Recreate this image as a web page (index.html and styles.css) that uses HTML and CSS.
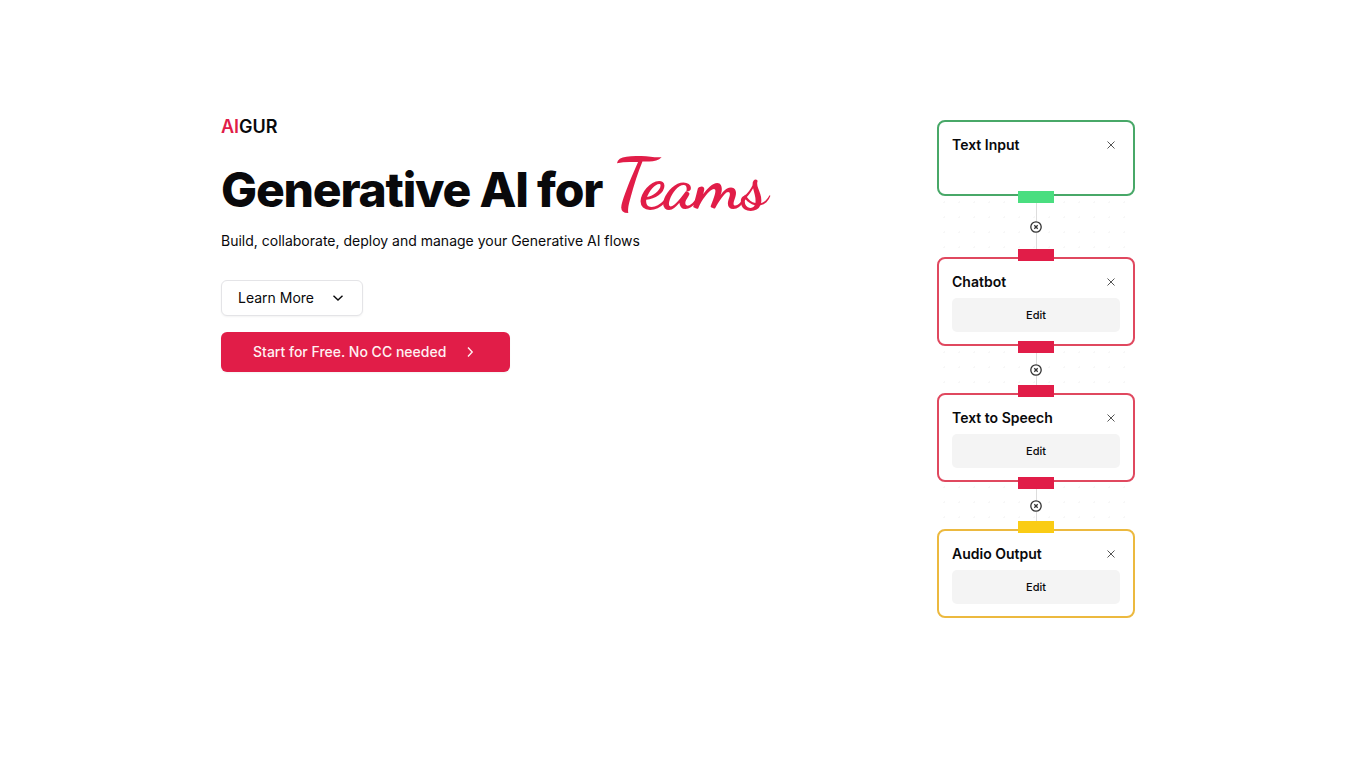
FILE: index.html
```html
<!DOCTYPE html>
<html lang="en">
<head>
    <meta charset="UTF-8">
    <meta name="viewport" content="width=device-width, initial-scale=1.0">
    <title>AIGUR - Generative AI for Teams</title>
    <link rel="stylesheet" href="styles.css">
</head>
<body>

    <main class="hero">
        <section class="intro">
            <div class="logo"><span>AI</span>GUR</div>
            <h1>Generative AI for <span class="teams">Teams</span></h1>
            <p>Build, collaborate, deploy and manage your Generative AI flows</p>

            <button type="button" class="btn btn-outline">
                Learn More
                <svg width="16" height="16" viewBox="0 0 16 16"><path d="M3.5 5.8l4.5 4.2 4.5-4.2"/></svg>
            </button>
            <a href="#" class="btn btn-primary">
                Start for Free. No CC needed
                <svg width="16" height="16" viewBox="0 0 16 16"><path d="M6 3.5l4.2 4.5-4.2 4.5"/></svg>
            </a>
        </section>

        <!-- Flow preview -->
        <section class="flow">
            <div class="node node-input">
                <div class="node-header">
                    <h2>Text Input</h2>
                    <button type="button" class="close" aria-label="Remove Text Input">
                        <svg width="10" height="10" viewBox="0 0 10 10"><path d="M1.5 1.5l7 7M8.5 1.5l-7 7"/></svg>
                    </button>
                </div>
                <span class="port port-bottom"></span>
            </div>

            <div class="connector connector-long">
                <button type="button" aria-label="Disconnect">
                    <svg width="12" height="12" viewBox="0 0 12 12"><circle cx="6" cy="6" r="5.2"/><path d="M4.3 4.3l3.4 3.4M7.7 4.3l-3.4 3.4"/></svg>
                </button>
            </div>

            <div class="node node-ai">
                <span class="port port-top"></span>
                <div class="node-header">
                    <h2>Chatbot</h2>
                    <button type="button" class="close" aria-label="Remove Chatbot">
                        <svg width="10" height="10" viewBox="0 0 10 10"><path d="M1.5 1.5l7 7M8.5 1.5l-7 7"/></svg>
                    </button>
                </div>
                <button type="button" class="edit">Edit</button>
                <span class="port port-bottom"></span>
            </div>

            <div class="connector">
                <button type="button" aria-label="Disconnect">
                    <svg width="12" height="12" viewBox="0 0 12 12"><circle cx="6" cy="6" r="5.2"/><path d="M4.3 4.3l3.4 3.4M7.7 4.3l-3.4 3.4"/></svg>
                </button>
            </div>

            <div class="node node-ai">
                <span class="port port-top"></span>
                <div class="node-header">
                    <h2>Text to Speech</h2>
                    <button type="button" class="close" aria-label="Remove Text to Speech">
                        <svg width="10" height="10" viewBox="0 0 10 10"><path d="M1.5 1.5l7 7M8.5 1.5l-7 7"/></svg>
                    </button>
                </div>
                <button type="button" class="edit">Edit</button>
                <span class="port port-bottom"></span>
            </div>

            <div class="connector">
                <button type="button" aria-label="Disconnect">
                    <svg width="12" height="12" viewBox="0 0 12 12"><circle cx="6" cy="6" r="5.2"/><path d="M4.3 4.3l3.4 3.4M7.7 4.3l-3.4 3.4"/></svg>
                </button>
            </div>

            <div class="node node-output">
                <span class="port port-top"></span>
                <div class="node-header">
                    <h2>Audio Output</h2>
                    <button type="button" class="close" aria-label="Remove Audio Output">
                        <svg width="10" height="10" viewBox="0 0 10 10"><path d="M1.5 1.5l7 7M8.5 1.5l-7 7"/></svg>
                    </button>
                </div>
                <button type="button" class="edit">Edit</button>
            </div>
        </section>
    </main>

</body>
</html>
```
FILE: styles.css
```css
* {
    box-sizing: border-box;
}

body {
    margin: 0;
    font-family: Inter, sans-serif;
    font-size: 14px;
    color: #09090b;
    background-color: #fff;
}

h1, h2, p {
    margin: 0;
}

button {
    font-family: inherit;
    color: inherit;
    cursor: pointer;
}

svg {
    display: block;
    fill: none;
    stroke: currentColor;
}

.hero {
    display: flex;
    justify-content: space-between;
    align-items: flex-start;
    max-width: 924px;
    margin: 0 auto;
    padding: 113px 0;
}

.intro {
    display: flex;
    flex-direction: column;
    align-items: flex-start;
}

.logo {
    font-size: 18px;
    line-height: 28px;
    font-weight: 600;
}

.logo span,
.teams {
    color: #e11d48;
}

h1 {
    margin-top: 11px;
    font-size: 48px;
    line-height: 72px;
    font-weight: 800;
    letter-spacing: -0.025em;
    white-space: nowrap;
}

.teams {
    font-family: "Dancing Script", "Liberation Serif", cursive;
    font-size: 72px;
    line-height: 64px;
    font-weight: 700;
}

.intro p {
    margin-top: 3px;
    line-height: 24px;
}

.btn {
    display: flex;
    align-items: center;
    gap: 16px;
    border-radius: 6px;
    font-size: 14px;
    line-height: 20px;
    text-decoration: none;
    box-shadow: 0 1px 2px rgba(0, 0, 0, 0.05);
}

.btn svg {
    stroke-width: 1.4;
}

.btn-outline {
    height: 36px;
    margin-top: 27px;
    padding: 0 16px;
    border: 1px solid #e4e4e7;
    background-color: #fff;
}

.btn-primary {
    height: 40px;
    margin-top: 16px;
    padding: 0 32px;
    font-weight: 500;
    color: #fff1f2;
    background-color: #e11d48;
}

/* Flow preview */
.flow {
    width: 198px;
    margin: 7px 10px 0 0;
    background-image: radial-gradient(circle, #f7f7f7 1px, transparent 1px);
    background-size: 15px 15px;
}

.node {
    position: relative;
    height: 89px;
    padding: 13px 13px 0;
    border: 2px solid;
    border-radius: 8px;
    background-color: #fff;
}

.node-input {
    height: 76px;
    border-color: #48a868;
    --port: #4ade80;
}

.node-ai {
    border-color: #e0485f;
    --port: #e11d48;
}

.node-output {
    border-color: #ecb93f;
    --port: #facc15;
}

.node-header {
    display: flex;
    justify-content: space-between;
    align-items: center;
    height: 20px;
    padding-right: 4px;
}

.node h2 {
    font-size: 14px;
    line-height: 20px;
    font-weight: 600;
}

.close {
    padding: 0;
    border: none;
    background: none;
    color: #555;
}

.edit {
    display: block;
    width: 100%;
    height: 34px;
    margin-top: 6px;
    padding: 0;
    border: none;
    border-radius: 5px;
    font-size: 11px;
    font-weight: 500;
    background-color: #f4f4f4;
}

.port {
    position: absolute;
    left: 50%;
    width: 36px;
    height: 12px;
    margin-left: -18px;
    background-color: var(--port);
    z-index: 1;
}

.port-top {
    top: -10px;
}

.port-bottom {
    bottom: -9px;
}

.connector {
    display: flex;
    justify-content: center;
    align-items: center;
    height: 47px;
    background: linear-gradient(#ddd, #ddd) center / 1px 100% no-repeat;
}

.connector-long {
    height: 61px;
}

.connector button {
    padding: 0;
    border: none;
    border-radius: 50%;
    background-color: #fff;
    color: #333;
}

.connector svg {
    stroke-width: 1.3;
}
```
